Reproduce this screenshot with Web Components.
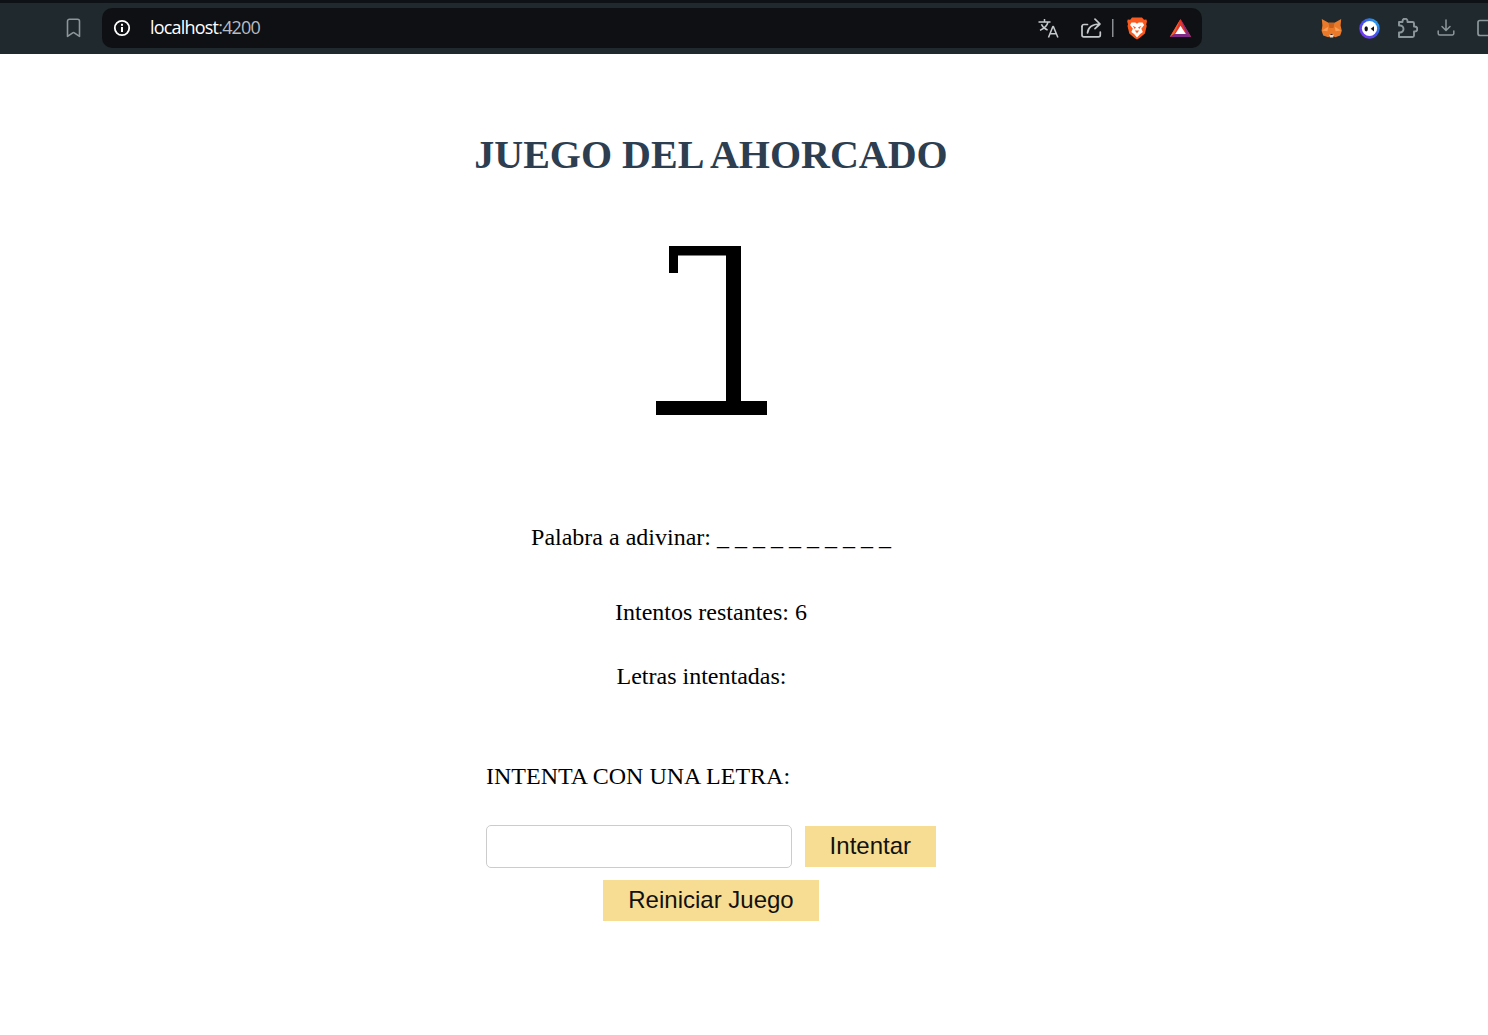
<!DOCTYPE html>
<html lang="es">
<head>
<meta charset="utf-8">
<title>Juego del ahorcado</title>
<style>
html, body { margin: 0; background: #fff; overflow: hidden; }
body { font-family: "Liberation Serif", serif; }
</style>
</head>
<body>
<browser-bar url-host="localhost" url-port=":4200"></browser-bar>
<hangman-game></hangman-game>

<script>
// top browser chrome
const barTemplate = document.createElement("template");
barTemplate.innerHTML = `
<style>
:host { display: block; height: 54px; box-sizing: border-box; background: #20292d; border-top: 3px solid #0e1216; overflow: hidden; font-family: "Open Sans", sans-serif; }
.row { display: flex; align-items: center; height: 50px; padding-left: 65px; }
.row svg { display: block; flex: none; }
.address { display: flex; flex: none; align-items: center; width: 1100px; height: 40px; margin-left: 20px; box-sizing: border-box; padding-left: 11px; background: #0e1014; border-radius: 10px; }
.url { margin-left: 19px; margin-top: -2px; font-size: 18px; letter-spacing: -0.8px; color: #fff; }
.url span { color: #b6bcc4; }
.end { margin-left: auto; display: flex; align-items: center; }
.ext { display: flex; flex: none; align-items: center; margin-left: 119px; }
</style>
<div class="row">
  <svg width="17" height="20" viewBox="0 0 17 20" fill="none" stroke="#8c979c" stroke-width="1.6" stroke-linejoin="round"><path d="M2.5 3.2a2 2 0 0 1 2-2h8a2 2 0 0 1 2 2v15.2l-5.2-3.6a1.4 1.4 0 0 0-1.6 0l-5.2 3.6z"/></svg>
  <div class="address">
    <svg width="18" height="18" viewBox="0 0 18 18"><circle cx="9" cy="9" r="7.2" fill="none" stroke="#fff" stroke-width="1.8"/><rect x="8" y="8" width="2" height="5" fill="#fff"/><rect x="8" y="4.800" width="2" height="2" fill="#fff"/></svg>
    <div class="url"><slot name="host"></slot><span><slot name="port"></slot></span></div>
    <div class="end">
      <svg width="21" height="20" viewBox="0 0 21 20" fill="none" stroke="#c6c9cc" stroke-width="1.5" stroke-linejoin="round"><path d="M0.5 4h12M6.500 1V4M10 4c-.8 3.600-3.400 6.400-8 8.400M3.400 6.200c1.200 2.800 3.400 4.800 6.200 5.800"/><path d="M10.500 19.500 14.800 8.600h.6L19.900 19.500M12 15.800h6.400"/></svg>
      <svg style="margin-left:22px" width="21" height="20" viewBox="0 0 21 20" fill="none" stroke="#c6c9cc" stroke-width="1.7" stroke-linecap="round" stroke-linejoin="round"><path d="M6.500 6.500H3a2 2 0 0 0-2 2"/><path d="M1 8.500v8.500a1.800 1.800 0 0 0 1.800 1.800H17.500a1.800 1.800 0 0 0 1.800-1.800V14"/><path d="M6.500 15c.5-6 4.500-8.800 12.500-9M14 1.200l5 4.800-5 4.600"/></svg>
      <svg style="margin-left:10px" width="2" height="18" viewBox="0 0 2 18"><rect width="1.500" height="18" fill="#8a8e92"/></svg>
      <svg style="margin-left:13px" width="20" height="23" viewBox="0 0 20 23"><path d="M5 .6h10l2 2.200 2.400-.4.600 2-.8 2.800.5 1.800-1.800 7.600L12.500 21 10 22.400 7.500 21l-5.200-4.400L.500 9l.5-1.800L.2 4.400l.6-2 2.400.4z" fill="#fb5a1f"/><path d="M4.500 5.500h3.800L10 6.700l1.700-1.200h3.800l1.600 2.400-2.800 3.800 1.600 3.200-2.800 2.100L10 20.400 7.100 17 4.300 14.900l1.600-3.200L3.100 7.900z" fill="#fff"/><path d="M7.800 13.500h4.400L10 16.200z" fill="#fb5a1f"/><path d="M5.800 8.800 9 10.400 7.600 12zM14.200 8.800 11 10.400l1.400 1.600z" fill="#fb5a1f"/></svg>
      <svg style="margin-left:22px" width="23" height="20" viewBox="0 0 23 20"><path d="M11.500 1 .8 19h21.400z" fill="#e5342a"/><path d="M11.500 1 .8 19 5.500 15.800z" fill="#f2622c"/><path d="M11.500 1 22.200 19l-4.700-3.200z" fill="#8a2a7f"/><path d="M.8 19h21.400l-4.700-3.200h-12z" fill="#7e2a84"/><path d="M11.500 7.800 6.200 16h10.600z" fill="#fff"/></svg>
      <span style="width:10px"></span>
    </div>
  </div>
  <div class="ext">
    <svg width="21" height="19" viewBox="0 0 21 19"><path d="M.8 0 7.500 3.800h6L20.200 0l-.6 6.500 1.200 5.200-1.600 4.800-5 1.700-1.600-1H8.800l-1.600 1-5-1.700L.6 11.700 1.400 6.500z" fill="#ea7a2a"/><path d="M1 11.500 7.300 7.800l-.9 4.400zM20 11.500l-6.300-3.700.9 4.400z" fill="#f8a05a"/><path d="M7.500 3.800h6l-1 5.200h-4z" fill="#c9611c"/><path d="M8.200 15.800h4.600l-.6 2.600H8.800z" fill="#e9d8c8"/><path d="M8.900 16.100h3.200l-1.600-1.400z" fill="#2a2320"/></svg>
    <svg style="margin-left:17px" width="21" height="21" viewBox="0 0 21 21"><defs><linearGradient id="ring" x1="0" y1="1" x2="1" y2="0"><stop offset="0" stop-color="#8b2ff0"/><stop offset=".55" stop-color="#3f55ea"/><stop offset="1" stop-color="#19c2e8"/></linearGradient></defs><circle cx="10.500" cy="10.500" r="10.200" fill="url(#ring)"/><circle cx="10.500" cy="10.500" r="7.600" fill="#fff"/><ellipse cx="7.200" cy="10.800" rx="1.700" ry="2.600" fill="#14131c"/><path d="M15 8.200v5.200l-3.300-2.600z" fill="#14131c"/></svg>
    <svg style="margin-left:17px" width="21" height="21" viewBox="0 0 21 21" fill="none" stroke="#8c979c" stroke-width="1.900" stroke-linejoin="round"><path d="M2 4H5.500V3.200a2.500 2.500 0 0 1 5 0V4H15.500a1.500 1.500 0 0 1 1.500 1.500V8.500h.8a2.500 2.500 0 0 1 0 5H17V17.500a1.500 1.500 0 0 1-1.500 1.500H2V14.500H3a3.500 3.500 0 0 0 0-7H2z"/></svg>
    <svg style="margin-left:19px" width="18" height="18" viewBox="0 0 18 18" fill="none" stroke="#8c979c" stroke-width="1.500" stroke-linecap="round" stroke-linejoin="round"><path d="M9 1v10M5 7.500l4 4 4-4"/><path d="M1.200 12v2.500a1.500 1.500 0 0 0 1.500 1.500h12.600a1.500 1.500 0 0 0 1.500-1.500V12"/></svg>
    <svg style="margin-left:22px" width="18" height="18" viewBox="0 0 18 18" fill="none" stroke="#8c979c" stroke-width="1.700"><rect x="1" y="1.500" width="20" height="15" rx="2"/></svg>
  </div>
</div>
`;

class BrowserBar extends HTMLElement {
  constructor() {
    super();
    this.attachShadow({ mode: "open" });
    this.shadowRoot.appendChild(barTemplate.content.cloneNode(true));
  }

  connectedCallback() {
    const host = document.createElement("span");
    host.slot = "host";
    host.textContent = this.getAttribute("url-host");
    const port = document.createElement("span");
    port.slot = "port";
    port.textContent = this.getAttribute("url-port");
    this.append(host, port);
  }
}

// yellow action button
const buttonTemplate = document.createElement("template");
buttonTemplate.innerHTML = `
<style>
:host { display: inline-block; }
button { display: block; height: 41px; padding: 0 25px 2px; border: 0; border-radius: 0; background: #f7dd93; color: #111; font: 24px "Liberation Sans", Arial, sans-serif; cursor: pointer; }
</style>
<button><slot></slot></button>
`;

class GameButton extends HTMLElement {
  constructor() {
    super();
    this.attachShadow({ mode: "open" });
    this.shadowRoot.appendChild(buttonTemplate.content.cloneNode(true));
  }
}

const gallowsTemplate = document.createElement("template");
gallowsTemplate.innerHTML = `
<style>
:host { display: block; width: 112px; height: 169px; }
svg { display: block; }
</style>
<svg width="112" height="169" viewBox="0 0 112 169" fill="#000">
  <rect x="14" y="0" width="72" height="9.500"/>
  <rect x="14" y="0" width="9" height="27"/>
  <rect x="71" y="0" width="15" height="156"/>
  <rect x="1" y="155" width="111" height="14"/>
</svg>
`;

class HangmanGallows extends HTMLElement {
  constructor() {
    super();
    this.attachShadow({ mode: "open" });
    this.shadowRoot.appendChild(gallowsTemplate.content.cloneNode(true));
  }
}

// the whole game column
const gameTemplate = document.createElement("template");
gameTemplate.innerHTML = `
<style>
:host { display: block; font: 24px/28px "Liberation Serif", "Times New Roman", serif; color: #000; }
.page { display: flex; justify-content: center; padding-right: 66px; }
.game { width: 450px; display: flex; flex-direction: column; align-items: center; padding-top: 78px; }
h1 { margin: 0; font-size: 40px; line-height: 46px; font-weight: bold; color: #2c3e50; white-space: nowrap; }
hangman-gallows { margin-top: 68px; }
p { margin: 0; text-align: center; white-space: nowrap; }
.word { margin-top: 108px; }
.left { margin-top: 47px; }
.tried { margin-top: 36px; padding-right: 19px; }
.prompt { margin-top: 72px; align-self: flex-start; }
.controls { display: flex; align-items: center; align-self: stretch; justify-content: space-between; margin-top: 35px; }
input { display: block; width: 306px; height: 43px; box-sizing: border-box; border: 1px solid #ccc; border-radius: 5px; background: #fff; padding: 0 10px; font-size: 24px; outline: none; }
.reset { margin-top: 12px; }
</style>
<div class="page">
  <div class="game">
    <h1>JUEGO DEL AHORCADO</h1>
    <hangman-gallows></hangman-gallows>
    <p class="word">Palabra a adivinar: <span id="word"></span></p>
    <p class="left">Intentos restantes: <span id="left"></span></p>
    <p class="tried">Letras intentadas:</p>
    <p class="prompt">INTENTA CON UNA LETRA:</p>
    <div class="controls">
      <input type="text" maxlength="1" aria-label="Letra">
      <game-button id="try">Intentar</game-button>
    </div>
    <game-button class="reset" id="reset">Reiniciar Juego</game-button>
  </div>
</div>
`;

class HangmanGame extends HTMLElement {
  constructor() {
    super();
    this.attachShadow({ mode: "open" });
    this.shadowRoot.appendChild(gameTemplate.content.cloneNode(true));
    this.blanks = 10;
    this.tries = 6;
  }

  connectedCallback() {
    this.shadowRoot.querySelector("#word").textContent = Array(this.blanks).fill("_").join(" ");
    this.shadowRoot.querySelector("#left").textContent = this.tries;
  }
}

window.customElements.define("browser-bar", BrowserBar);
window.customElements.define("game-button", GameButton);
window.customElements.define("hangman-gallows", HangmanGallows);
window.customElements.define("hangman-game", HangmanGame);
</script>
</body>
</html>
